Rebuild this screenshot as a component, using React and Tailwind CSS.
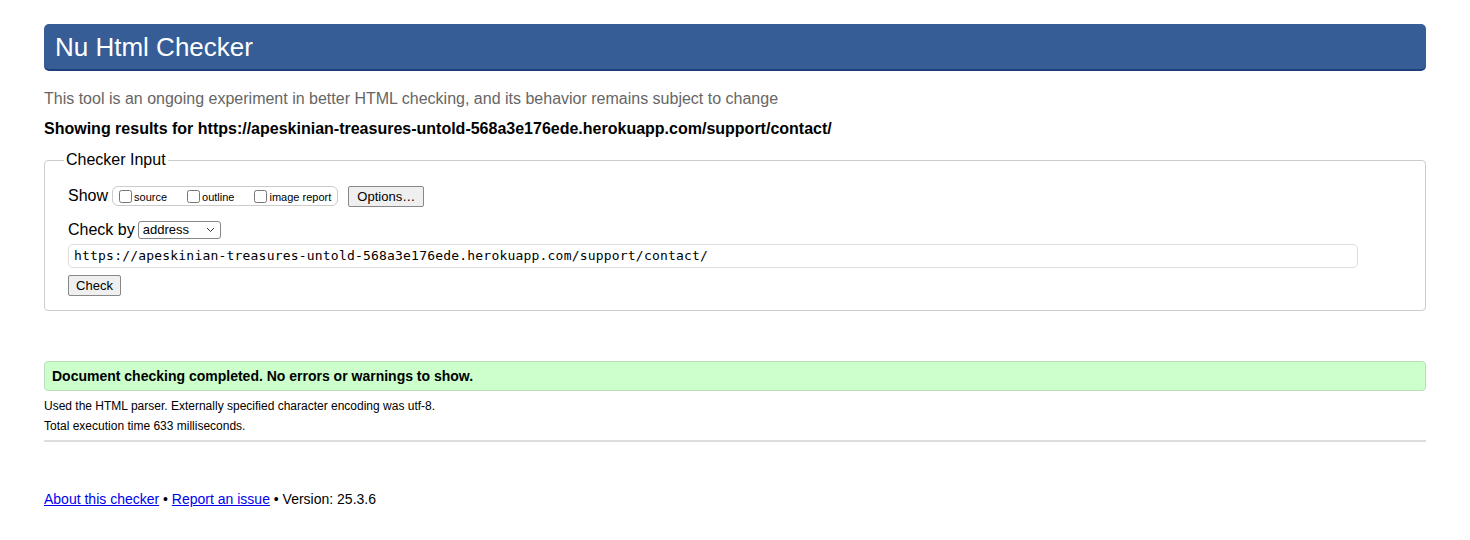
import React from 'react';

const sans = { fontFamily: '"Liberation Sans", Arial, sans-serif' };

const App = () => {
  return (
    <div className="min-h-[540px] bg-white px-[44px] pt-[24px] text-black font-['Liberation_Sans',Arial,sans-serif]">
      <h1 className="h-[47px] rounded-[5px] border-b-2 border-[#1d3f7a] bg-[#365d96] px-[11px] text-[26px] leading-[46px] text-white">
        Nu Html Checker
      </h1>

      <p className="mt-[17px] text-[16px] leading-[22px] text-[#666]">
        This tool is an ongoing experiment in better HTML checking, and its behavior remains subject to change
      </p>
      <p className="mt-[8px] text-[16px] font-bold leading-[22px]">
        Showing results for https://apeskinian-treasures-untold-568a3e176ede.herokuapp.com/support/contact/
      </p>

      <fieldset className="mt-[11px] rounded-[4px] border border-[#ccc] pb-[13px] pl-[23px] pr-[67px]">
        <legend className="-ml-[4px] px-[2px] text-[16px] leading-[18px]">Checker Input</legend>

        <div className="mt-[15px] flex items-center">
          <span className="text-[16px]">Show</span>
          <div className="ml-[4px] flex h-[20px] items-center rounded-[6px] border border-[#ccc] pl-[6px] pr-[6px] text-[11px]">
            <label className="flex items-center">
              <input type="checkbox" className="m-0 h-[13px] w-[13px]" />
              <span className="ml-[2px] mt-[3px]">source</span>
            </label>
            <label className="ml-[20px] flex items-center">
              <input type="checkbox" className="m-0 h-[13px] w-[13px]" />
              <span className="ml-[2px] mt-[3px]">outline</span>
            </label>
            <label className="ml-[20px] flex items-center">
              <input type="checkbox" className="m-0 h-[13px] w-[13px]" />
              <span className="ml-[2px] mt-[3px]">image report</span>
            </label>
          </div>
          <button className="ml-[10px] h-[21px] w-[76px] rounded-[2px] border border-[#888] bg-[#efefef] text-[13px]">
            Options…
          </button>
        </div>

        <div className="mt-[10px] flex items-center">
          <span className="text-[16px]">Check by</span>
          <div className="relative ml-[3px] flex h-[18px] w-[83px] items-center rounded-[3px] border border-[#888] bg-white pl-[4px] text-[13px]">
            address
            <svg className="absolute right-[5px] top-[5px]" width="9" height="6" viewBox="0 0 9 6" fill="none" stroke="#333" strokeWidth="1">
              <path d="M1 1 L4.5 4.5 L8 1" />
            </svg>
          </div>
        </div>

        <div className="mt-[2px] flex h-[24px] items-center rounded-[5px] border border-[#ddd] pl-[5px] font-['DejaVu_Sans_Mono',monospace] text-[13px] tracking-[0.2px]">
          https://apeskinian-treasures-untold-568a3e176ede.herokuapp.com/support/contact/
        </div>

        <button className="mt-[7px] h-[21px] w-[53px] rounded-[2px] border border-[#888] bg-[#efefef] text-[13px]" style={sans}>
          Check
        </button>
      </fieldset>

      <div className="mt-[50px] h-[30px] rounded-[4px] border border-[#bdb] bg-[#ccffcc] px-[7px] text-[14px] font-bold leading-[28px]">
        Document checking completed. No errors or warnings to show.
      </div>

      <p className="mt-[7px] text-[12px] leading-[16px]">
        Used the HTML parser. Externally specified character encoding was utf-8.
      </p>
      <p className="mt-[4px] text-[12px] leading-[16px]">Total execution time 633 milliseconds.</p>
      <hr className="mt-[6px] border-t-2 border-[#ddd]" />

      <p className="mt-[48px] text-[14px] leading-[18px]">
        <a href="#" className="text-[#0000ee] underline">About this checker</a>
        {' • '}
        <a href="#" className="text-[#0000ee] underline">Report an issue</a>
        {' • Version: 25.3.6'}
      </p>
    </div>
  );
};

export default App;
